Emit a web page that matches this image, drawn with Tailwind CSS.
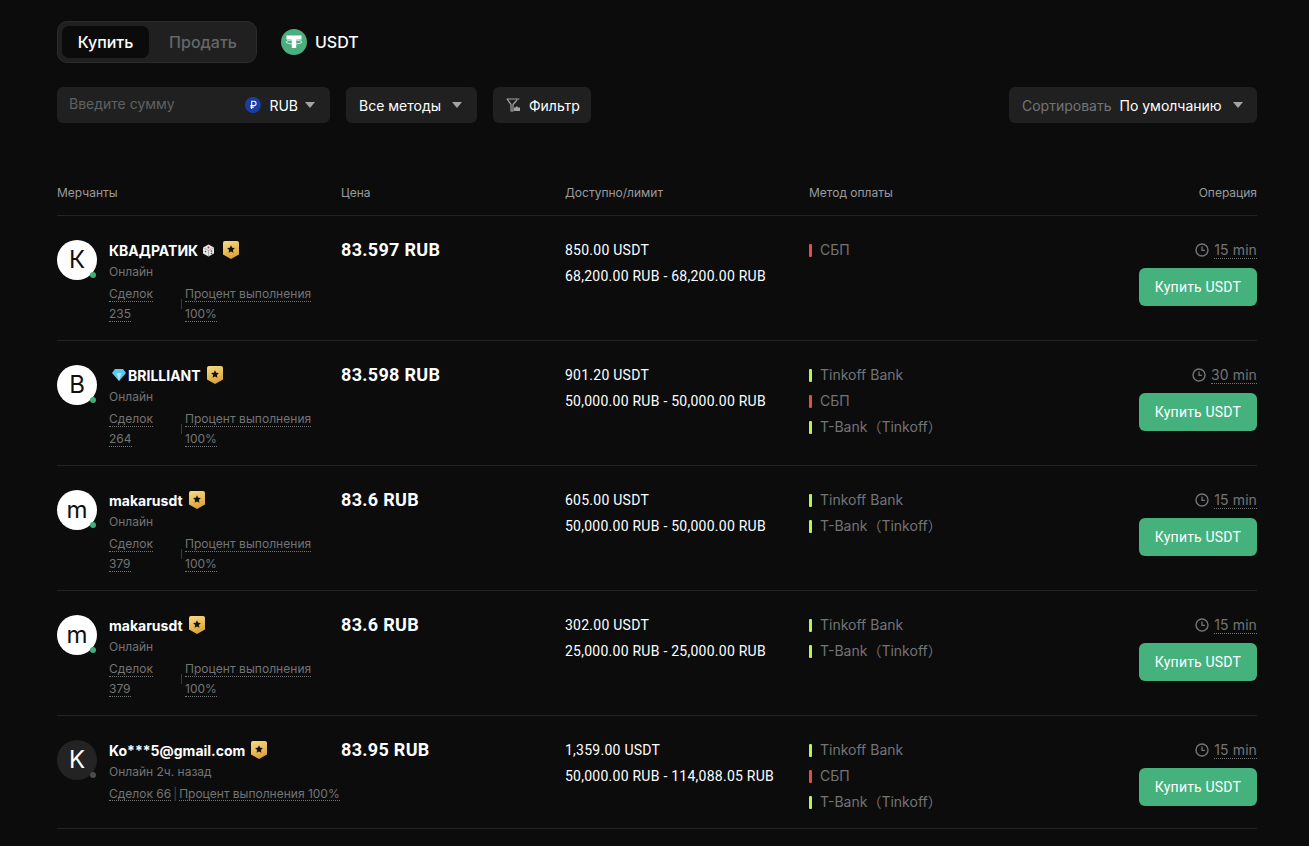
<!DOCTYPE html>
<html lang="ru">
<head>
<meta charset="UTF-8" />
<title>P2P</title>
<script src="https://cdn.jsdelivr.net/npm/@tailwindcss/browser@4"></script>
</head>
<body class="bg-[#0c0c0d] min-h-screen font-['Inter','Noto_Sans_CJK_SC',sans-serif] text-white overflow-hidden">
<svg class="absolute w-0 h-0">
  <defs>
    <linearGradient id="gold" x1="0" y1="0" x2="0.3" y2="1"><stop offset="0" stop-color="#f7dc88"/><stop offset="1" stop-color="#dca43a"/></linearGradient>
    <symbol id="badge" viewBox="0 0 16 18"><path d="M2 0h12a2 2 0 0 1 2 2v11.500L8 18l-8-4.500V2a2 2 0 0 1 2-2z" fill="url(#gold)"/><path d="M8 4.200l1.200 2.500 2.700.4-2 1.900.5 2.700L8 10.400l-2.400 1.300.5-2.700-2-1.900 2.700-.4z" fill="#15120a"/></symbol>
    <symbol id="clock" viewBox="0 0 14 14"><circle cx="7" cy="7" r="6" fill="none" stroke="#737476" stroke-width="1.400"/><path d="M7 3.500V7.300h3" fill="none" stroke="#737476" stroke-width="1.300"/></symbol>
  </defs>
</svg>
<main class="w-[1200px] ml-[57px]">
  <!-- tabs -->
  <div class="flex items-center h-[42px] mt-[21px]">
    <div class="flex w-[200px] h-[42px] p-[4px] bg-[#202020] border border-[#2c2c2c] rounded-[10px]">
      <div class="w-[87px] h-[32px] rounded-[7px] bg-[#0b0b0b] flex items-center justify-center text-[16px] font-medium">Купить</div>
      <div class="flex-1 pl-[5px] flex items-center justify-center text-[16px] font-medium text-[#666769]">Продать</div>
    </div>
    <svg class="w-[26px] h-[26px] ml-[24px]" viewBox="0 0 26 26"><circle cx="13" cy="13" r="13" fill="#4aae7f"/><path d="M5.500 6.500h15v4h-5.300V19h-4.400v-8.500H5.500z" fill="#fff"/><ellipse cx="13" cy="13" rx="8" ry="2" fill="none" stroke="#fff" stroke-opacity=".75" stroke-width="1"/></svg>
    <span class="ml-[8px] text-[16px] font-medium">USDT</span>
  </div>
  <!-- filters -->
  <div class="flex mt-[24px] h-[36px] text-[14px]">
    <div class="w-[273px] bg-[#202020] rounded-[6px] flex items-center pl-[12px] pr-[15px]">
      <span class="text-[#5f6062] flex-1 -mt-[3px]">Введите сумму</span>
      <svg class="w-[16px] h-[16px]" viewBox="0 0 16 16"><circle cx="8" cy="8" r="8" fill="#1c3da0"/><path d="M6.700 12V4.300h2.200a2 2 0 0 1 0 4.300H5.300M5.300 10.300h3.600" fill="none" stroke="#fff" stroke-width="1.100"/></svg>
      <span class="ml-[8px]">RUB</span>
      <svg class="w-[10px] h-[6px] ml-[7px] -mt-[1px]" viewBox="0 0 10 6"><path d="M0 0h10L5 6z" fill="#a3a4a6"/></svg>
    </div>
    <div class="w-[131px] ml-[16px] bg-[#202020] rounded-[6px] flex items-center pl-[13px]">
      Все методы
      <svg class="w-[10px] h-[6px] ml-[11px] -mt-[1px]" viewBox="0 0 10 6"><path d="M0 0h10L5 6z" fill="#a3a4a6"/></svg>
    </div>
    <div class="w-[98px] ml-[16px] bg-[#202020] rounded-[6px] flex items-center pl-[13px]">
      <svg class="w-[14px] h-[14px] mr-[9px]" viewBox="0 0 14 14"><path d="M.7 1h12.600M1 1l4 5.500V13h2V6.500L11 2" fill="none" stroke="#a3a4a6" stroke-width="1.200"/><path d="M8 9.500h1.500l.6-1h1.400l.5 1H14V13H8z" fill="#a3a4a6"/></svg>
      Фильтр
    </div>
    <div class="ml-auto w-[248px] bg-[#202020] rounded-[6px] flex items-center pl-[13px]">
      <span class="text-[#737476]">Сортировать</span>
      <span class="ml-[8px]">По умолчанию</span>
      <svg class="w-[10px] h-[6px] ml-[11px] -mt-[1px]" viewBox="0 0 10 6"><path d="M0 0h10L5 6z" fill="#a3a4a6"/></svg>
    </div>
  </div>
  <!-- table head -->
  <div class="grid grid-cols-[284px_224px_244px_1fr] mt-[53px] h-[40px] text-[12px] text-[#9a9b9d] border-b border-[#232324] leading-[20px] pt-[7px]">
    <div>Мерчанты</div><div>Цена</div><div>Доступно/лимит</div>
    <div class="flex justify-between"><span>Метод оплаты</span><span>Операция</span></div>
  </div>

  <!-- row 1 -->
  <div class="grid grid-cols-[284px_224px_244px_1fr] h-[125px] pt-[24px] border-b border-[#232324]">
    <div class="flex">
      <div class="relative shrink-0 w-[40px] h-[40px] rounded-full bg-white text-[#111] text-[24px] flex items-center justify-center">К<span class="absolute right-[1px] bottom-[2px] w-[6px] h-[6px] rounded-full bg-[#3fae77]"></span></div>
      <div class="ml-[12px]">
        <div class="flex items-center h-[20px] text-[14px] font-bold">КВАДРАТИК<svg class="w-[13px] h-[13px] ml-[4px]" viewBox="0 0 13 13"><path d="M6.500.5l5.500 3v6l-5.500 3-5.500-3v-6z" fill="#e6e6e6"/><path d="M1 3.500l5.500 3 5.500-3M6.500 6.500v6" fill="none" stroke="#8a8a8a" stroke-width=".6"/><circle cx="6.500" cy="3.500" r="1" fill="#b33"/><circle cx="3.500" cy="7.500" r=".8" fill="#444"/><circle cx="9.500" cy="7" r=".8" fill="#444"/><circle cx="9.500" cy="9.500" r=".8" fill="#444"/></svg><svg class="w-[16px] h-[18px] ml-[8px] -mt-[1px]"><use href="#badge"/></svg></div>
        <div class="text-[12px] leading-[20px] mt-[1px] pt-[1px] text-[#737476]">Онлайн</div>
        <div class="flex text-[12px] leading-[20px] mt-[2px] text-[#737476]">
          <div class="w-[72px]"><div><span class="border-b border-dotted border-[#737476]">Сделок</span></div><div><span class="border-b border-dotted border-[#737476]">235</span></div></div>
          <div class="w-px h-[10px] bg-[#3a3a3b] mt-[15px] mr-[3px]"></div>
          <div><div><span class="border-b border-dotted border-[#737476] tracking-[.05px]">Процент выполнения</span></div><div><span class="border-b border-dotted border-[#737476]">100%</span></div></div>
        </div>
      </div>
    </div>
    <div class="font-['Roboto',sans-serif] text-[18px] font-bold leading-[20px] tracking-[.3px]">83.597 RUB</div>
    <div class="font-['Roboto',sans-serif] text-[14px] leading-[20px] tracking-[.25px]"><div>850.00 USDT</div><div class="mt-[6px]">68,200.00 RUB - 68,200.00 RUB</div></div>
    <div class="flex justify-between">
      <div class="text-[14px] leading-[20px] text-[#737476]">
        <div class="flex items-center"><span class="w-[3px] h-[13px] rounded-[1px] bg-[#d9534a] mr-[8px]"></span>СБП</div>
      </div>
      <div class="flex flex-col items-end">
        <div class="flex items-center h-[20px] text-[14px] text-[#737476]"><svg class="w-[14px] h-[14px] mr-[5px]"><use href="#clock"/></svg><span class="border-b border-dotted border-[#737476] leading-[16px] tracking-[.1px]">15 min</span></div>
        <button class="mt-[8px] w-[118px] h-[38px] rounded-[6px] bg-[#45b27d] font-['Roboto',sans-serif] text-[14px] tracking-[.2px]">Купить USDT</button>
      </div>
    </div>
  </div>

  <!-- row 2 -->
  <div class="grid grid-cols-[284px_224px_244px_1fr] h-[125px] pt-[24px] border-b border-[#232324]">
    <div class="flex">
      <div class="relative shrink-0 w-[40px] h-[40px] rounded-full bg-white text-[#111] text-[24px] flex items-center justify-center">B<span class="absolute right-[1px] bottom-[2px] w-[6px] h-[6px] rounded-full bg-[#3fae77]"></span></div>
      <div class="ml-[12px]">
        <div class="flex items-center h-[20px] text-[14px] font-bold"><svg class="w-[14px] h-[12px] ml-[3px] mr-[2px]" viewBox="0 0 14 12"><path d="M3 0h8l3 4-7 8-7-8z" fill="#5cc8f2"/><path d="M4.500 4h5L7 12z" fill="#a9e6fb"/></svg>BRILLIANT<svg class="w-[16px] h-[18px] ml-[6px] -mt-[1px]"><use href="#badge"/></svg></div>
        <div class="text-[12px] leading-[20px] mt-[1px] pt-[1px] text-[#737476]">Онлайн</div>
        <div class="flex text-[12px] leading-[20px] mt-[2px] text-[#737476]">
          <div class="w-[72px]"><div><span class="border-b border-dotted border-[#737476]">Сделок</span></div><div><span class="border-b border-dotted border-[#737476]">264</span></div></div>
          <div class="w-px h-[10px] bg-[#3a3a3b] mt-[15px] mr-[3px]"></div>
          <div><div><span class="border-b border-dotted border-[#737476] tracking-[.05px]">Процент выполнения</span></div><div><span class="border-b border-dotted border-[#737476]">100%</span></div></div>
        </div>
      </div>
    </div>
    <div class="font-['Roboto',sans-serif] text-[18px] font-bold leading-[20px] tracking-[.3px]">83.598 RUB</div>
    <div class="font-['Roboto',sans-serif] text-[14px] leading-[20px] tracking-[.25px]"><div>901.20 USDT</div><div class="mt-[6px]">50,000.00 RUB - 50,000.00 RUB</div></div>
    <div class="flex justify-between">
      <div class="text-[14px] leading-[20px] text-[#737476] flex flex-col gap-[6px]">
        <div class="flex items-center"><span class="w-[3px] h-[13px] rounded-[1px] bg-[#b7f35a] mr-[8px]"></span>Tinkoff Bank</div>
        <div class="flex items-center"><span class="w-[3px] h-[13px] rounded-[1px] bg-[#d9534a] mr-[8px]"></span>СБП</div>
        <div class="flex items-center"><span class="w-[3px] h-[13px] rounded-[1px] bg-[#b7f35a] mr-[8px]"></span>T-Bank（Tinkoff）</div>
      </div>
      <div class="flex flex-col items-end">
        <div class="flex items-center h-[20px] text-[14px] text-[#737476]"><svg class="w-[14px] h-[14px] mr-[5px]"><use href="#clock"/></svg><span class="border-b border-dotted border-[#737476] leading-[16px] tracking-[.1px]">30 min</span></div>
        <button class="mt-[8px] w-[118px] h-[38px] rounded-[6px] bg-[#45b27d] font-['Roboto',sans-serif] text-[14px] tracking-[.2px]">Купить USDT</button>
      </div>
    </div>
  </div>

  <!-- row 3 -->
  <div class="grid grid-cols-[284px_224px_244px_1fr] h-[125px] pt-[24px] border-b border-[#232324]">
    <div class="flex">
      <div class="relative shrink-0 w-[40px] h-[40px] rounded-full bg-white text-[#111] text-[24px] flex items-center justify-center">m<span class="absolute right-[1px] bottom-[2px] w-[6px] h-[6px] rounded-full bg-[#3fae77]"></span></div>
      <div class="ml-[12px]">
        <div class="flex items-center h-[20px] text-[14px] font-bold">makarusdt<svg class="w-[16px] h-[18px] ml-[6px] -mt-[1px]"><use href="#badge"/></svg></div>
        <div class="text-[12px] leading-[20px] mt-[1px] pt-[1px] text-[#737476]">Онлайн</div>
        <div class="flex text-[12px] leading-[20px] mt-[2px] text-[#737476]">
          <div class="w-[72px]"><div><span class="border-b border-dotted border-[#737476]">Сделок</span></div><div><span class="border-b border-dotted border-[#737476]">379</span></div></div>
          <div class="w-px h-[10px] bg-[#3a3a3b] mt-[15px] mr-[3px]"></div>
          <div><div><span class="border-b border-dotted border-[#737476] tracking-[.05px]">Процент выполнения</span></div><div><span class="border-b border-dotted border-[#737476]">100%</span></div></div>
        </div>
      </div>
    </div>
    <div class="font-['Roboto',sans-serif] text-[18px] font-bold leading-[20px] tracking-[.3px]">83.6 RUB</div>
    <div class="font-['Roboto',sans-serif] text-[14px] leading-[20px] tracking-[.25px]"><div>605.00 USDT</div><div class="mt-[6px]">50,000.00 RUB - 50,000.00 RUB</div></div>
    <div class="flex justify-between">
      <div class="text-[14px] leading-[20px] text-[#737476] flex flex-col gap-[6px]">
        <div class="flex items-center"><span class="w-[3px] h-[13px] rounded-[1px] bg-[#b7f35a] mr-[8px]"></span>Tinkoff Bank</div>
        <div class="flex items-center"><span class="w-[3px] h-[13px] rounded-[1px] bg-[#b7f35a] mr-[8px]"></span>T-Bank（Tinkoff）</div>
      </div>
      <div class="flex flex-col items-end">
        <div class="flex items-center h-[20px] text-[14px] text-[#737476]"><svg class="w-[14px] h-[14px] mr-[5px]"><use href="#clock"/></svg><span class="border-b border-dotted border-[#737476] leading-[16px] tracking-[.1px]">15 min</span></div>
        <button class="mt-[8px] w-[118px] h-[38px] rounded-[6px] bg-[#45b27d] font-['Roboto',sans-serif] text-[14px] tracking-[.2px]">Купить USDT</button>
      </div>
    </div>
  </div>

  <!-- row 4 -->
  <div class="grid grid-cols-[284px_224px_244px_1fr] h-[125px] pt-[24px] border-b border-[#232324]">
    <div class="flex">
      <div class="relative shrink-0 w-[40px] h-[40px] rounded-full bg-white text-[#111] text-[24px] flex items-center justify-center">m<span class="absolute right-[1px] bottom-[2px] w-[6px] h-[6px] rounded-full bg-[#3fae77]"></span></div>
      <div class="ml-[12px]">
        <div class="flex items-center h-[20px] text-[14px] font-bold">makarusdt<svg class="w-[16px] h-[18px] ml-[6px] -mt-[1px]"><use href="#badge"/></svg></div>
        <div class="text-[12px] leading-[20px] mt-[1px] pt-[1px] text-[#737476]">Онлайн</div>
        <div class="flex text-[12px] leading-[20px] mt-[2px] text-[#737476]">
          <div class="w-[72px]"><div><span class="border-b border-dotted border-[#737476]">Сделок</span></div><div><span class="border-b border-dotted border-[#737476]">379</span></div></div>
          <div class="w-px h-[10px] bg-[#3a3a3b] mt-[15px] mr-[3px]"></div>
          <div><div><span class="border-b border-dotted border-[#737476] tracking-[.05px]">Процент выполнения</span></div><div><span class="border-b border-dotted border-[#737476]">100%</span></div></div>
        </div>
      </div>
    </div>
    <div class="font-['Roboto',sans-serif] text-[18px] font-bold leading-[20px] tracking-[.3px]">83.6 RUB</div>
    <div class="font-['Roboto',sans-serif] text-[14px] leading-[20px] tracking-[.25px]"><div>302.00 USDT</div><div class="mt-[6px]">25,000.00 RUB - 25,000.00 RUB</div></div>
    <div class="flex justify-between">
      <div class="text-[14px] leading-[20px] text-[#737476] flex flex-col gap-[6px]">
        <div class="flex items-center"><span class="w-[3px] h-[13px] rounded-[1px] bg-[#b7f35a] mr-[8px]"></span>Tinkoff Bank</div>
        <div class="flex items-center"><span class="w-[3px] h-[13px] rounded-[1px] bg-[#b7f35a] mr-[8px]"></span>T-Bank（Tinkoff）</div>
      </div>
      <div class="flex flex-col items-end">
        <div class="flex items-center h-[20px] text-[14px] text-[#737476]"><svg class="w-[14px] h-[14px] mr-[5px]"><use href="#clock"/></svg><span class="border-b border-dotted border-[#737476] leading-[16px] tracking-[.1px]">15 min</span></div>
        <button class="mt-[8px] w-[118px] h-[38px] rounded-[6px] bg-[#45b27d] font-['Roboto',sans-serif] text-[14px] tracking-[.2px]">Купить USDT</button>
      </div>
    </div>
  </div>

  <!-- row 5 -->
  <div class="grid grid-cols-[284px_224px_244px_1fr] h-[113px] pt-[24px] border-b border-[#232324]">
    <div class="flex">
      <div class="relative shrink-0 w-[40px] h-[40px] rounded-full bg-[#232324] text-white text-[24px] flex items-center justify-center">K<span class="absolute right-[1px] bottom-[2px] w-[6px] h-[6px] rounded-full bg-[#4a4b50]"></span></div>
      <div class="ml-[12px] whitespace-nowrap">
        <div class="flex items-center h-[20px] text-[14px] font-bold">Ko***5@gmail.com<svg class="w-[16px] h-[18px] ml-[6px] -mt-[1px]"><use href="#badge"/></svg></div>
        <div class="text-[12px] leading-[20px] mt-[1px] pt-[1px] text-[#737476]">Онлайн 2ч. назад</div>
        <div class="flex text-[12px] leading-[20px] mt-[2px] text-[#737476]">
          <span class="border-b border-dotted border-[#737476] h-[17px]">Сделок 66</span>
          <span class="text-[#4a4a4b] mx-[2px]">|</span>
          <span class="border-b border-dotted border-[#737476] h-[17px]">Процент выполнения 100%</span>
        </div>
      </div>
    </div>
    <div class="font-['Roboto',sans-serif] text-[18px] font-bold leading-[20px] tracking-[.3px]">83.95 RUB</div>
    <div class="font-['Roboto',sans-serif] text-[14px] leading-[20px] tracking-[.25px]"><div>1,359.00 USDT</div><div class="mt-[6px]">50,000.00 RUB - 114,088.05 RUB</div></div>
    <div class="flex justify-between">
      <div class="text-[14px] leading-[20px] text-[#737476] flex flex-col gap-[6px]">
        <div class="flex items-center"><span class="w-[3px] h-[13px] rounded-[1px] bg-[#b7f35a] mr-[8px]"></span>Tinkoff Bank</div>
        <div class="flex items-center"><span class="w-[3px] h-[13px] rounded-[1px] bg-[#d9534a] mr-[8px]"></span>СБП</div>
        <div class="flex items-center"><span class="w-[3px] h-[13px] rounded-[1px] bg-[#b7f35a] mr-[8px]"></span>T-Bank（Tinkoff）</div>
      </div>
      <div class="flex flex-col items-end">
        <div class="flex items-center h-[20px] text-[14px] text-[#737476]"><svg class="w-[14px] h-[14px] mr-[5px]"><use href="#clock"/></svg><span class="border-b border-dotted border-[#737476] leading-[16px] tracking-[.1px]">15 min</span></div>
        <button class="mt-[8px] w-[118px] h-[38px] rounded-[6px] bg-[#45b27d] font-['Roboto',sans-serif] text-[14px] tracking-[.2px]">Купить USDT</button>
      </div>
    </div>
  </div>
</main>
</body>
</html>
